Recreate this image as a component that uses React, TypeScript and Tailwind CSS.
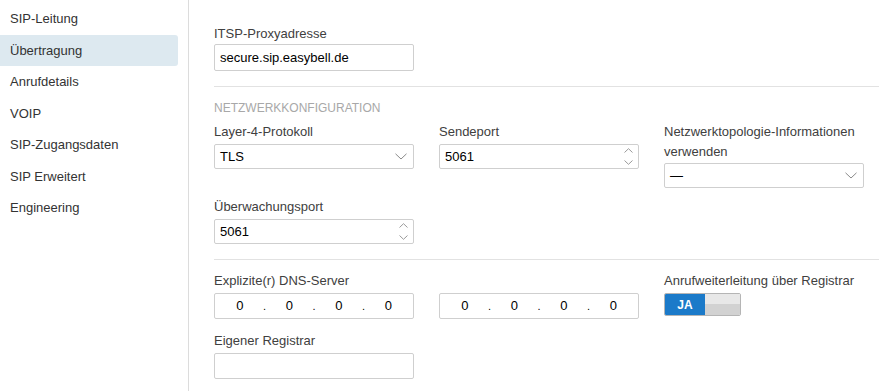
import React from "react";

const font = { fontFamily: '"Liberation Sans", Arial, sans-serif' };

function Chevron() {
  return (
    <svg width="12" height="7" viewBox="0 0 12 7" className="shrink-0">
      <path d="M0.5 0.8 L6 6 L11.5 0.8" fill="none" stroke="#8a8a8a" strokeWidth="1" />
    </svg>
  );
}

function Spinner() {
  return (
    <div className="flex flex-col items-center gap-[7px] mr-[3px]">
      <svg width="9" height="5" viewBox="0 0 9 5">
        <path d="M0.5 4.5 L4.5 0.7 L8.5 4.5" fill="none" stroke="#9a9a9a" strokeWidth="1" />
      </svg>
      <svg width="9" height="5" viewBox="0 0 9 5">
        <path d="M0.5 0.5 L4.5 4.3 L8.5 0.5" fill="none" stroke="#9a9a9a" strokeWidth="1" />
      </svg>
    </div>
  );
}

function Label({ children, mb = "mb-[2px]" }: { children: React.ReactNode; mb?: string }) {
  return <div className={`text-[13px] leading-[20px] text-[#404040] ${mb}`}>{children}</div>;
}

function TextBox({ value, h = "h-[25px]" }: { value?: string; h?: string }) {
  return (
    <div className={`w-[200px] ${h} border border-[#cfcfcf] rounded-[2px] bg-white flex items-center px-[5px] text-[13px] text-black`}>
      {value}
    </div>
  );
}

function SelectBox({ value }: { value: string }) {
  return (
    <div className="w-[200px] h-[25px] border border-[#cfcfcf] rounded-[2px] bg-white flex items-center justify-between pl-[5px] pr-[6px] text-[13px] text-black">
      <span>{value}</span>
      <Chevron />
    </div>
  );
}

function NumberBox({ value }: { value: string }) {
  return (
    <div className="w-[200px] h-[25px] border border-[#cfcfcf] rounded-[2px] bg-white flex items-center justify-between pl-[5px] pr-[2px] text-[13px] text-black">
      <span>{value}</span>
      <Spinner />
    </div>
  );
}

function IpBox() {
  const seg = (k: number) => (
    <div key={`s${k}`} className="flex-1 text-center">0</div>
  );
  const dot = (k: number) => (
    <div key={`d${k}`} className="w-0 flex justify-center text-[11px]">.</div>
  );
  return (
    <div className="w-[200px] h-[26px] border border-[#cfcfcf] rounded-[2px] bg-white flex items-baseline pt-[4px] text-[13px] leading-[16px] text-black">
      {seg(0)}
      {dot(0)}
      {seg(1)}
      {dot(1)}
      {seg(2)}
      {dot(2)}
      {seg(3)}
    </div>
  );
}

export default function App() {
  const items = [
    "SIP-Leitung",
    "Übertragung",
    "Anrufdetails",
    "VOIP",
    "SIP-Zugangsdaten",
    "SIP Erweitert",
    "Engineering",
  ];
  return (
    <div className="flex w-[879px] h-[391px] bg-white overflow-hidden" style={font}>
      <div className="w-[189px] shrink-0 border-r border-[#dcdcdc] pt-[3px] pr-[10px]">
        {items.map((it, i) => (
          <div
            key={it}
            className={`h-[31.5px] flex items-center pl-[10px] text-[13px] text-[#333] ${
              i === 1 ? "bg-[#dde9f0] rounded-r-[3px]" : ""
            }`}
          >
            {it}
          </div>
        ))}
      </div>
      <div className="flex-1 pl-[25px] pt-[24px]">
        <Label mb="mb-0">ITSP-Proxyadresse</Label>
        <TextBox value="secure.sip.easybell.de" h="h-[27px]" />
        <div className="h-px bg-[#e2e2e2] mt-[15px]" />
        <div className="mt-[13px] text-[12px] leading-[16px] text-[#a8a8a8]">NETZWERKKONFIGURATION</div>
        <div className="mt-[6px] flex gap-[25px]">
          <div>
            <Label>Layer-4-Protokoll</Label>
            <SelectBox value="TLS" />
          </div>
          <div>
            <Label>Sendeport</Label>
            <NumberBox value="5061" />
          </div>
          <div>
            <div className="text-[13px] leading-[20px] text-[#404040] mb-[1px] w-[200px]">
              Netzwerktopologie-Informationen verwenden
            </div>
            <SelectBox value="—" />
          </div>
        </div>
        <div className="mt-[9px]">
          <Label>Überwachungsport</Label>
          <NumberBox value="5061" />
        </div>
        <div className="h-px bg-[#e2e2e2] mt-[15px]" />
        <div className="mt-[11px] flex gap-[25px]">
          <div>
            <Label>Explizite(r) DNS-Server</Label>
            <IpBox />
          </div>
          <div className="pt-[22px]">
            <IpBox />
          </div>
          <div>
            <Label>Anrufweiterleitung über Registrar</Label>
            <div className="w-[77px] h-[23px] border border-[#b5b5b5] rounded-[2px] flex overflow-hidden">
              <div className="w-[40px] bg-[#1b7ac9] text-white text-[12px] font-bold flex items-center justify-center">
                JA
              </div>
              <div className="flex-1 bg-[linear-gradient(#e8e8e8_0%,#e8e8e8_50%,#d2d2d2_50%,#d2d2d2_100%)]" />
            </div>
          </div>
        </div>
        <div className="mt-[12px]">
          <Label>Eigener Registrar</Label>
          <TextBox h="h-[26px]" />
        </div>
      </div>
    </div>
  );
}
